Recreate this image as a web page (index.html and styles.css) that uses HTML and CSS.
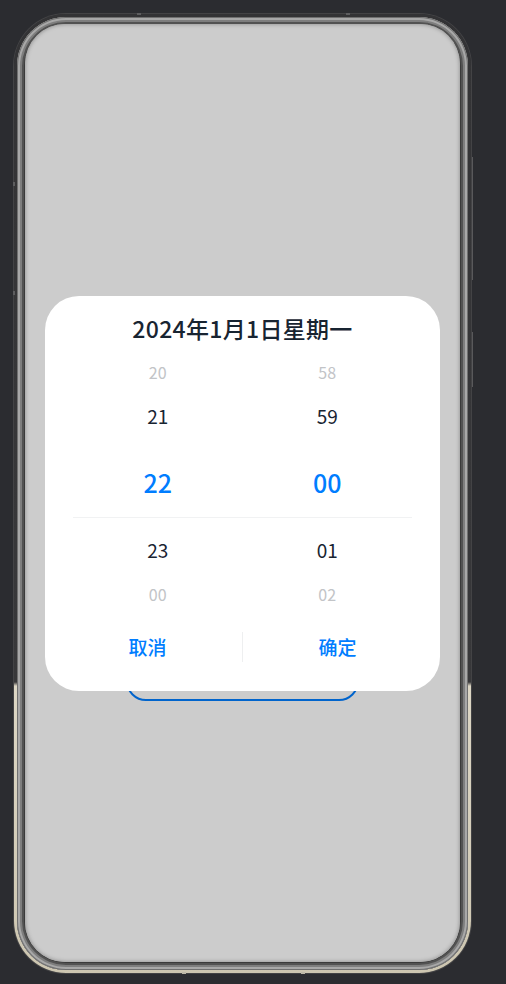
FILE: index.html
```html
<!DOCTYPE html>
<html lang="zh-CN">
<head>
<meta charset="utf-8">
<title>TimePicker</title>
<link rel="stylesheet" href="styles.css">
</head>
<body>
<div class="phone">
  <span class="mark mark-top1"></span>
  <span class="mark mark-top2"></span>
  <span class="mark mark-bot1"></span>
  <span class="mark mark-bot2"></span>
  <span class="mark mark-left1"></span>
  <span class="mark mark-left2"></span>
  <span class="key key-vol"></span>
  <span class="key key-power"></span>
  <div class="bezel">
    <div class="screen">
      <div class="page">
        <button class="open-btn"></button>
      </div>
      <div class="mask">
        <div class="dialog">
          <div class="title">2024年1月1日星期一</div>
          <div class="picker">
            <div class="column">
              <div class="item faded">20</div>
              <div class="item">21</div>
              <div class="item selected">22</div>
              <div class="item">23</div>
              <div class="item faded">00</div>
            </div>
            <div class="column">
              <div class="item faded">58</div>
              <div class="item">59</div>
              <div class="item selected">00</div>
              <div class="item">01</div>
              <div class="item faded">02</div>
            </div>
          </div>
          <div class="actions">
            <div class="action">取消</div>
            <div class="action-divider"></div>
            <div class="action">确定</div>
          </div>
        </div>
      </div>
    </div>
  </div>
</div>
</body>
</html>
```
FILE: styles.css
```css
html, body {
  margin: 0;
  padding: 0;
  background: #2b2c30;
  width: 506px;
  height: 984px;
  overflow: hidden;
  font-family: "Noto Sans CJK SC", "Noto Sans", sans-serif;
}

.phone {
  position: relative;
  margin: 14px 0 0 14px;
  width: 457px;
  height: 959px;
  box-sizing: border-box;
  padding: 3px;
  border-radius: 52px;
  background: linear-gradient(to bottom, #333335 0, #38383a 668px, #dcd6c4 672px, #cdc6b1 100%);
  box-shadow: 0 0 0 1px #434345;
}

.bezel {
  height: 100%;
  box-sizing: border-box;
  padding: 7px 8px 8px 8px;
  border-radius: 49px;
  background: #3a3a3a;
  box-shadow:
    inset 0 0 0 1px #707070,
    inset 0 0 0 3px #a8a8a8,
    inset 0 0 0 5px #7e7e7e,
    inset 0 0 0 7px #525252;
}

.screen {
  position: relative;
  height: 100%;
  border-radius: 40px;
  background: #ffffff;
  overflow: hidden;
}

.page {
  display: flex;
  flex-direction: column;
  align-items: center;
}

.open-btn {
  margin-top: 637px;
  width: 233px;
  height: 40px;
  border: 2px solid #007dff;
  border-radius: 20px;
  background: #ffffff;
}

.mask {
  position: absolute;
  inset: 0;
  background: rgba(0, 0, 0, 0.2);
  display: flex;
  align-items: center;
  justify-content: center;
  box-shadow: inset 0 0 4px rgba(0, 0, 0, 0.35);
  border-radius: 40px;
}

.dialog {
  width: 395px;
  box-sizing: border-box;
  padding: 16px 8px 24px 8px;
  background: #ffffff;
  border-radius: 34px;
  display: flex;
  flex-direction: column;
}

.title {
  height: 32px;
  line-height: 32px;
  margin-bottom: 6px;
  text-align: center;
  font-size: 23px;
  letter-spacing: 0.3px;
  font-weight: 500;
  color: #182431;
}

.picker {
  margin: 0 20px;
  display: flex;
}

.column {
  flex: 1;
  display: flex;
  flex-direction: column;
}

.item {
  height: 44px;
  display: flex;
  align-items: center;
  justify-content: center;
  font-size: 19px;
  color: #182431;
}

.item.faded {
  font-size: 16px;
  color: #c2c4c7;
}

.item.selected {
  height: 69px;
  margin: 10px 0;
  border-bottom: 1px solid #f1f2f3;
  font-size: 25px;
  font-weight: 500;
  color: #007dff;
}

.actions {
  margin-top: 11px;
  height: 40px;
  display: flex;
  align-items: center;
}

.action {
  flex: 1;
  text-align: center;
  font-size: 19px;
  font-weight: 500;
  color: #007dff;
}

.action-divider {
  width: 1px;
  height: 30px;
  background: #eeeff0;
}

.mark {
  position: absolute;
  background: #5d5d5f;
}
.mark-top1 { left: 123px; top: -1px; width: 4px; height: 2px; }
.mark-top2 { left: 332px; top: -1px; width: 4px; height: 2px; }
.mark-bot1 { left: 168px; bottom: -1px; width: 4px; height: 2px; background: #bdb8a8; }
.mark-bot2 { left: 287px; bottom: -1px; width: 4px; height: 2px; background: #bdb8a8; }
.mark-left1 { left: -1px; top: 168px; width: 2px; height: 4px; }
.mark-left2 { left: -1px; top: 277px; width: 2px; height: 4px; }

.key {
  position: absolute;
  right: -2px;
  width: 1px;
  background: #59595b;
}
.key-vol { top: 143px; height: 123px; }
.key-power { top: 318px; height: 55px; }
```
